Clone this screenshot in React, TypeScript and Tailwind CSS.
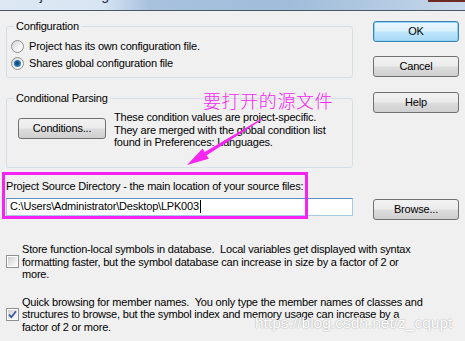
import React from "react";

const BTN =
  "flex items-center justify-center w-[86px] h-[21px] rounded-[3px] border border-[#707070] bg-[linear-gradient(180deg,#f2f2f2_0%,#ebebeb_48%,#dddddd_52%,#cfcfcf_100%)] text-black";

function Radio({ checked }: { checked?: boolean }) {
  return (
    <span className="flex items-center justify-center w-[13px] h-[13px] rounded-full border border-[#8e8f8f] bg-[linear-gradient(135deg,#d2d2d2_0%,#f4f4f4_60%,#ffffff_100%)]">
      {checked && (
        <span className="w-[7px] h-[7px] rounded-full bg-[radial-gradient(circle_at_45%_45%,#0c3f6e_0%,#1f6aa8_45%,#6fb6e6_100%)]" />
      )}
    </span>
  );
}

function Check({ checked }: { checked?: boolean }) {
  return (
    <span className="flex items-center justify-center w-[13px] h-[13px] border border-[#8e8f8f] bg-white p-px">
      <span className="flex items-center justify-center w-full h-full bg-[linear-gradient(135deg,#cfcfcf_0%,#ececec_60%,#fafafa_100%)]">
        {checked && (
          <svg width="9" height="9" viewBox="0 0 9 9">
            <path d="M1 4.6 L3.4 7.2 L8 1.2" fill="none" stroke="#3a58a0" strokeWidth="1.8" />
          </svg>
        )}
      </span>
    </span>
  );
}

export default function App() {
  return (
    <div className="relative w-[465px] h-[341px] overflow-hidden bg-[#f0f0f0] text-black text-[11px] leading-[13px] tracking-[-0.2px] font-['Liberation_Sans',Arial,sans-serif]">
      {/* Title bar (cut off) */}
      <div className="relative h-[11px] overflow-hidden border-b border-[#4b5866] bg-[linear-gradient(90deg,#dde8f4_0%,#d8e5f2_22%,#a8c2de_32%,#a0bcda_62%,#b6cde4_86%,#c9d9eb_100%)]">
        <div className="pl-[18px] -mt-[13px] text-[14px] leading-[16px] tracking-normal font-['Liberation_Sans',sans-serif] text-[#1e2b3a]">
          Project Settings
        </div>
        <div className="absolute right-0 top-0 w-[37px] h-[2px] bg-[#6e2a22]" />
      </div>

      <div className="flex">
        {/* Left column */}
        <div className="flex flex-col w-[353px] pl-[6px]">
          <fieldset className="mt-[9px] w-[347px] rounded-[3px] border border-[#d5dfe5] px-0 pt-[5px] pb-[5px]">
            <legend className="ml-[7px] px-[2px]">Configuration</legend>
            <div className="flex items-center h-[17px] pl-[4px] gap-[5px]">
              <Radio />
              <span>Project has its own configuration file.</span>
            </div>
            <div className="flex items-center h-[17px] pl-[4px] gap-[5px]">
              <Radio checked />
              <span>Shares global configuration file</span>
            </div>
          </fieldset>

          <fieldset className="mt-[14px] w-[347px] rounded-[3px] border border-[#d5dfe5] px-0 pb-[18px]">
            <legend className="ml-[7px] px-[2px]">Conditional Parsing</legend>
            <div className="flex items-start">
              <button className={`${BTN} ml-[11px] mt-[13px] w-[88px]`}>Conditions...</button>
              <div className="ml-[8px] mt-[6px] leading-[12.5px]">
                These condition values are project-specific.
                <br />
                They are merged with the global condition list
                <br />
                found in Preferences: Languages.
              </div>
            </div>
          </fieldset>

          <div className="mt-[12px]">Project Source Directory - the main location of your source files:</div>
          <div className="mt-[5px] flex items-center h-[18px] w-[347px] border border-[#a4c9e3] border-t-[#5f8fbd] bg-white pl-[3px]">
            <span>C:\Users\Administrator\Desktop\LPK003</span>
            <span className="ml-px w-px h-[13px] bg-black" />
          </div>
        </div>

        {/* Right column buttons */}
        <div className="flex flex-col ml-[20px]">
          <button className="mt-[10px] flex items-center justify-center w-[86px] h-[21px] rounded-[3px] border border-[#3c7fb1] shadow-[inset_0_0_0_1px_#8ed3f8] bg-[linear-gradient(180deg,#eaf6fd_0%,#d9f0fc_48%,#bee6fd_52%,#a7d9f5_100%)]">
            OK
          </button>
          <button className={`${BTN} mt-[14px]`}>Cancel</button>
          <button className={`${BTN} mt-[15px]`}>Help</button>
          <button className={`${BTN} mt-[86px]`}>Browse...</button>
        </div>
      </div>

      {/* Option checkboxes */}
      <div className="mt-[23px] flex items-center pl-[6px] gap-[3px]">
        <Check />
        <div className="leading-[12.5px] whitespace-pre">
          {"Store function-local symbols in database.  Local variables get displayed with syntax\nformatting faster, but the symbol database can increase in size by a factor of 2 or\nmore."}
        </div>
      </div>
      <div className="mt-[15px] flex items-center pl-[6px] gap-[3px]">
        <Check checked />
        <div className="leading-[12.5px] whitespace-pre">
          {"Quick browsing for member names.  You only type the member names of classes and\nstructures to browse, but the symbol index and memory usage can increase by a\nfactor of 2 or more."}
        </div>
      </div>

      {/* Annotation overlays */}
      <div className="absolute left-[2px] top-[172px] w-[306px] h-[47px] border-[3px] border-[#f822f2]" />
      <div className="absolute left-[203px] top-[89px] text-[18px] leading-[22px] tracking-[0.6px] text-[#f626f0] font-['Noto_Sans_CJK_SC','Noto_Sans',sans-serif] font-light">
        要打开的源文件
      </div>
      <svg className="absolute left-0 top-0" width="465" height="341" viewBox="0 0 465 341">
        <polygon
          points="187,165 202.6,148.5 204.7,151.9 261.7,118.5 262.3,119.5 206.7,155.3 208.8,158.7"
          fill="#f626f0"
        />
      </svg>
      <div className="absolute left-[255px] top-[314px] text-[15.5px] leading-[18px] tracking-normal text-white [text-shadow:0_0_1.5px_#8a8a8a] font-['Liberation_Sans',Arial,sans-serif]">
        https://blog.csdn.net/z_cqupt
      </div>
    </div>
  );
}
